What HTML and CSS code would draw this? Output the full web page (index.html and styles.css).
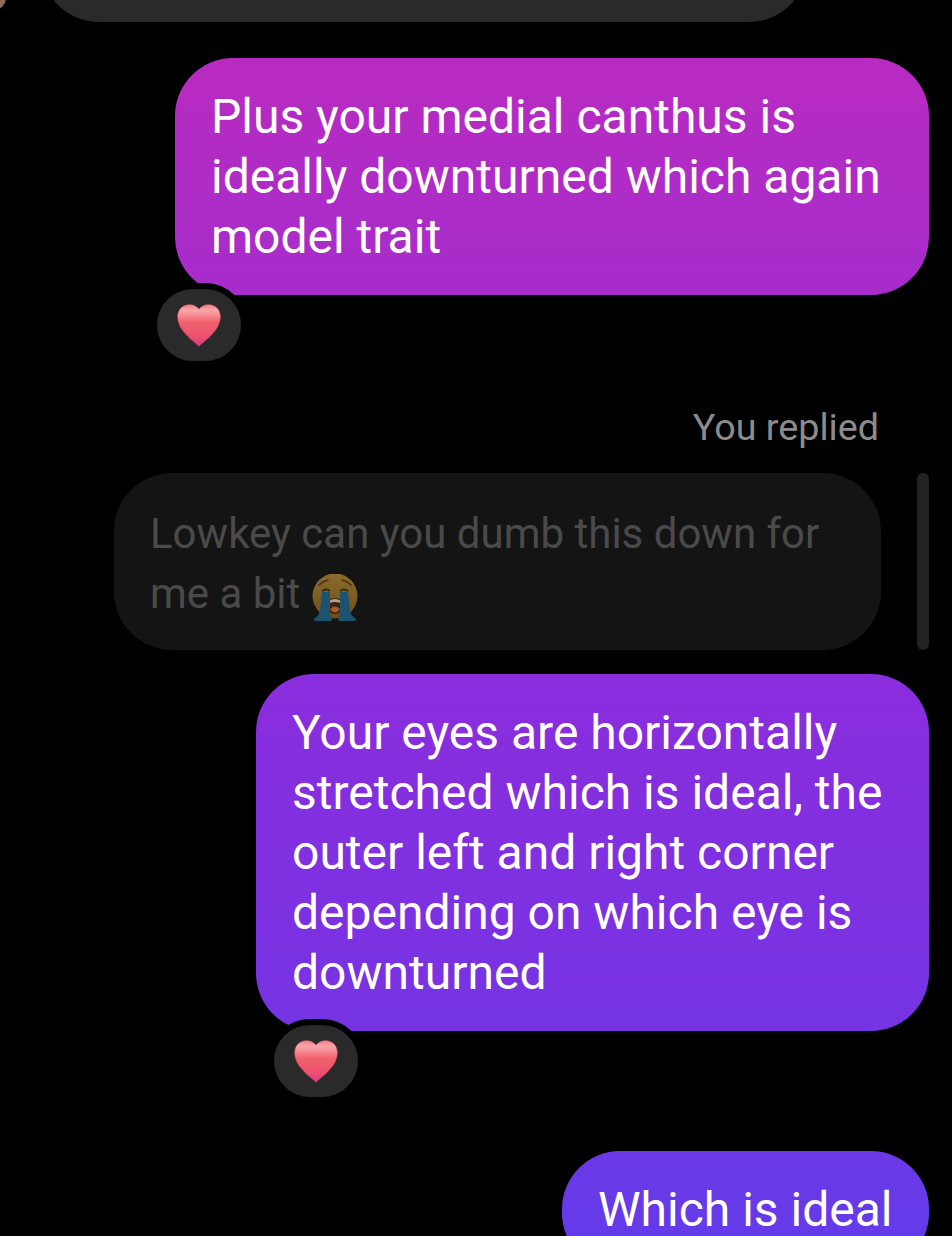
FILE: index.html
```html
<!DOCTYPE html>
<html lang="en">
<head>
	<meta charset="utf-8">
	<title>Messages</title>
	<link rel="stylesheet" href="styles.css">
</head>
<body>
	<svg class="svg-defs" width="0" height="0">
		<defs>
			<linearGradient id="heart-fill" x1="0" y1="0" x2="0" y2="1">
				<stop offset="0" stop-color="#f07f88"/>
				<stop offset="0.14" stop-color="#f8a6aa"/>
				<stop offset="0.42" stop-color="#f1626e"/>
				<stop offset="0.78" stop-color="#ec4f70"/>
				<stop offset="1" stop-color="#d83a98"/>
			</linearGradient>
			<linearGradient id="cry-face" x1="0" y1="0" x2="0" y2="1">
				<stop offset="0" stop-color="#98762f"/>
				<stop offset="1" stop-color="#77551c"/>
			</linearGradient>
			<symbol id="heart" viewBox="0 0 44 43">
				<path fill="url(#heart-fill)" stroke="#b8374a" stroke-opacity="0.5" stroke-width="0.8" d="M22 42.500C18 38 0.500 27 0.500 13C0.500 5.500 5.500 0.500 12.500 0.500C16.500 0.500 20 2.500 22 5C24 2.500 27.500 0.500 31.500 0.500C38.500 0.500 43.500 5.500 43.500 13C43.500 27 26 38 22 42.500Z"/>
			</symbol>
		</defs>
	</svg>

	<div class="thread">
		<div class="top-row">
			<div class="avatar"></div>
			<div class="bubble-incoming-top"></div>
		</div>

		<div class="message message-one">
			<div class="bubble bubble-sent width-one">Plus your medial canthus is<br>ideally downturned which again<br>model trait</div>
			<div class="reaction reaction-one">
				<svg class="heart"><use href="#heart"/></svg>
			</div>
		</div>

		<div class="reply-label">You replied</div>

		<div class="reply-row">
			<div class="bubble bubble-reply">Lowkey can you dumb this down for<br>me a bit
				<svg class="cry" viewBox="0 0 46 47">
					<circle cx="23" cy="22" r="22.500" fill="url(#cry-face)"/>
					<path d="M7 11q4-4 9-5M39 11q-4-4-9-5" stroke="#4a3512" stroke-width="1.600" fill="none" stroke-linecap="round"/>
					<path d="M10 17q4-3 8 0M28 17q4-3 8 0" stroke="#3a2a10" stroke-width="2" fill="none"/>
					<path d="M15.500 27q7.500-6 15 0q1 13-7.500 13q-8.500 0-7.500-13Z" fill="#4a2312"/>
					<path d="M18 35q5-5 10 0q-5 7-10 0Z" fill="#b8652c"/>
					<path d="M17.500 26.500q5.500-3 11 0v2.500q-5.500-2-11 0Z" fill="#bdb4a2"/>
					<path d="M10 18h8l0 22q1 3 2 5q0 2-3 2H4q-4-1-1-3q4-2 5-8Z" fill="#1f5a78"/>
					<path d="M36 18h-8l0 22q-1 3-2 5q0 2 3 2h13q4-1 1-3q-4-2-5-8Z" fill="#1f5a78"/>
				</svg>
			</div>
			<div class="scrollbar"></div>
		</div>

		<div class="message message-two">
			<div class="bubble bubble-sent width-two">Your eyes are horizontally<br>stretched which is ideal, the<br>outer left and right corner<br>depending on which eye is<br>downturned</div>
			<div class="reaction reaction-two">
				<svg class="heart"><use href="#heart"/></svg>
			</div>
		</div>

		<div class="message message-three">
			<div class="bubble bubble-sent width-three">Which is ideal</div>
		</div>
	</div>
</body>
</html>
```

FILE: styles.css
```css
* {
	margin: 0;
	padding: 0;
	box-sizing: border-box;
}

html, body {
	height: 1236px;
	overflow: hidden;
	background: #000;
}

body {
	font-family: Roboto, "Liberation Sans", sans-serif;
	font-size: 48px;
	line-height: 60px;
	color: #fff;
}

.svg-defs {
	position: absolute;
}

.thread {
	display: flex;
	flex-direction: column;
	padding-right: 23px;
}

.top-row {
	position: relative;
	height: 22px;
	padding-left: 41px;
	margin-right: -23px;
}

.avatar {
	position: absolute;
	left: -18px;
	top: -14px;
	width: 24px;
	height: 24px;
	border-radius: 50%;
	background: #8d6b55;
}

/* most of this bubble has scrolled off the top */
.bubble-incoming-top {
	width: 766px;
	height: 120px;
	margin-top: -98px;
	background: #2a2a2a;
	border-radius: 58px;
}

.message {
	position: relative;
	align-self: flex-end;
}

.message-one {
	margin-top: 36px;
}

.message-two {
	margin-top: 24px;
}

.message-three {
	margin-top: 120px;
}

.bubble {
	padding: 29px 0 28px 36px;
	border-radius: 58px;
	white-space: nowrap;
}

.bubble-sent {
	background: linear-gradient(180deg, #bd2abe 0%, #a52dcc 25%, #8a2ddd 55%, #7434e3 85%, #643be9 100%) fixed;
}

.width-one {
	width: 754px;
}

.width-two {
	width: 673px;
}

.width-three {
	width: 367px;
	height: 120px;
}

.reaction {
	position: absolute;
	bottom: -72px;
	width: 96px;
	height: 84px;
	border: 6px solid #000;
	border-radius: 42px;
	background: #2a2a2a;
	display: flex;
	align-items: center;
	justify-content: center;
}

.reaction-one {
	left: -24px;
}

.reaction-two {
	left: 12px;
}

.heart {
	width: 44px;
	height: 43px;
}

.reply-label {
	align-self: flex-end;
	margin-top: 112px;
	margin-right: 50px;
	margin-bottom: -1px;
	font-size: 37.700px;
	line-height: 40px;
	color: #8c8c8c;
}

.reply-row {
	display: flex;
	justify-content: flex-end;
	gap: 36px;
	margin-top: 27px;
}

.bubble-reply {
	width: 767px;
	padding-top: 31px;
	padding-bottom: 26px;
	font-size: 42px;
	background: #141414;
	color: #4a4a4a;
}

.cry {
	width: 46px;
	height: 47px;
	vertical-align: -13px;
	margin-left: 1px;
	opacity: 0.9;
}

.scrollbar {
	width: 12px;
	border-radius: 6px;
	background: #222;
}
```
